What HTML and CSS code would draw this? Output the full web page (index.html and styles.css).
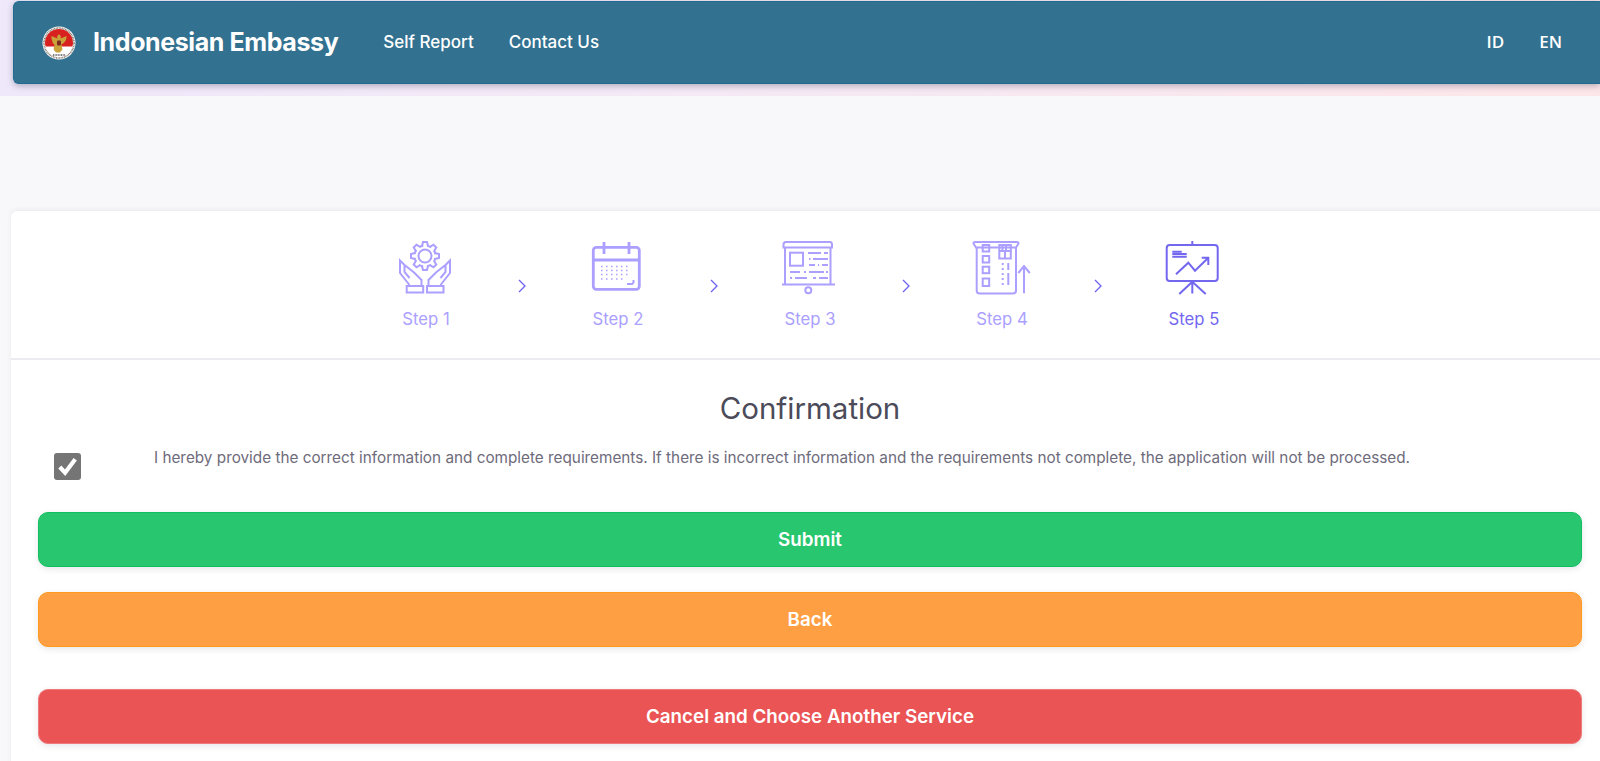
FILE: index.html
```html
<!DOCTYPE html>
<html lang="en">
<head>
<meta charset="utf-8">
<title>Indonesian Embassy</title>
<link rel="stylesheet" href="styles.css">
</head>
<body>
<header class="top-band">
  <nav class="navbar">
    <svg class="logo" viewBox="0 0 34 34" aria-hidden="true">
      <circle cx="17" cy="17" r="16.500" fill="#fff"/>
      <path d="M3 17a14 14 0 0 1 28 0c0 1.500-.3 2.500-.8 3.500H3.800C3.300 19.500 3 18.500 3 17z" fill="#d8201f"/>
      <circle cx="17" cy="17" r="15" fill="none" stroke="#5a4a3a" stroke-width="1.600" stroke-dasharray="1 .7" stroke-opacity=".75" pathLength="100"/>
      <path d="M17 8l2 2.500-.5 2 2.500-1 3.500-1.500c.3 3-1 6-3.500 7.500l-1.500 1 1 5-2.500 3h-4l-2.500-3 1-5-1.500-1C10.500 16 9.200 13 9.500 10l3.500 1.500 2.500 1-.5-2z" fill="#c9a23a"/>
      <rect x="15" y="14.500" width="4" height="5" rx="1" fill="#7a2a20"/>
      <path d="M11 29h12" stroke="#555" stroke-width="1.500" stroke-dasharray="1 .6"/>
    </svg>
    <a class="brand" href="#">Indonesian Embassy</a>
    <ul class="nav-links">
      <li><a href="#">Self Report</a></li>
      <li><a href="#">Contact Us</a></li>
    </ul>
    <ul class="lang-links">
      <li><a href="#">ID</a></li>
      <li><a href="#">EN</a></li>
    </ul>
  </nav>
</header>

<main class="card">
  <section class="stepper">
    <div class="step">
      <svg class="step-icon" viewBox="0 0 60 60" aria-hidden="true">
        <g transform="translate(29 18)">
          <g class="tooth-fill">
            <path d="M-3-10-2-14H2L3-10"/>
            <path d="M-3-10-2-14H2L3-10" transform="rotate(45)"/>
            <path d="M-3-10-2-14H2L3-10" transform="rotate(90)"/>
            <path d="M-3-10-2-14H2L3-10" transform="rotate(135)"/>
            <path d="M-3-10-2-14H2L3-10" transform="rotate(180)"/>
            <path d="M-3-10-2-14H2L3-10" transform="rotate(225)"/>
            <path d="M-3-10-2-14H2L3-10" transform="rotate(270)"/>
            <path d="M-3-10-2-14H2L3-10" transform="rotate(315)"/>
          </g>
          <circle r="10.500" stroke-dasharray="4.200 4.050" stroke-dashoffset="-1.900"/>
          <circle r="6.500"/>
        </g>
        <path d="M13.500 47 4 35V22.500l4.500 4.500v7l5 6M8.500 27l9 7 8 8v5"/>
        <path d="M44.500 47 54 35V22.500L49.500 27v7l-5 6M49.500 27l-9 7-8 8v5"/>
        <rect x="10.700" y="48" width="16.500" height="6.500"/>
        <rect x="31" y="48" width="16.500" height="6.500"/>
      </svg>
      <span class="step-label">Step 1</span>
    </div>
    <svg class="chevron" viewBox="0 0 8 14" aria-hidden="true"><path d="M1 1l6 6-6 6"/></svg>
    <div class="step">
      <svg class="step-icon" viewBox="0 0 60 60" aria-hidden="true">
        <rect class="thick" x="5.300" y="9.300" width="46" height="42" rx="3"/>
        <path class="thick" d="M5.300 22h46M16 4v12M41 4v12"/>
        <path class="dots" d="M13 28.500h30M13 32.500h30M13 36.500h30M13 41h24"/>
        <path d="M39 46h5l1.500-1.500V42"/>
      </svg>
      <span class="step-label">Step 2</span>
    </div>
    <svg class="chevron" viewBox="0 0 8 14" aria-hidden="true"><path d="M1 1l6 6-6 6"/></svg>
    <div class="step">
      <svg class="step-icon" viewBox="0 0 60 60" aria-hidden="true">
        <path d="M3.500 9.500V6.500C3.500 5 4.500 4 6 4h44c1 0 2 1 2 2.500v3zM5 9.500v37M50.500 9.500v37M2 46.500h53"/>
        <circle cx="28.300" cy="52.300" r="3"/>
        <rect x="10" y="14.700" width="13" height="13"/>
        <path d="M28 15h13M44 15h4M29 21h1.500M33 21h15M29 27h6M38 27h1M42 27h6M10 34h10M24 34h2M29 34h15M46 34h2M10 40h2M15 40h12M33 40h3M39 40h9"/>
      </svg>
      <span class="step-label">Step 3</span>
    </div>
    <svg class="chevron" viewBox="0 0 8 14" aria-hidden="true"><path d="M1 1l6 6-6 6"/></svg>
    <div class="step">
      <svg class="step-icon" viewBox="0 0 60 60" aria-hidden="true">
        <path d="M1.500 5.500c0-1 .7-1.500 1.500-1.500h42c1 0 1.500.5 1.500 1.500L44 9.500H4z"/>
        <path d="M4.700 9.500V52.500c0 1.500 1 3 3 3H41c2 0 3-1.500 3-3V9.500"/>
        <rect x="10.700" y="7" width="6.500" height="6.500"/>
        <rect x="10.700" y="18" width="6.500" height="6.500"/>
        <rect x="10.700" y="28.700" width="6.500" height="6.500"/>
        <rect x="10.700" y="40.500" width="6.500" height="7.500"/>
        <rect x="27.300" y="7" width="11.500" height="13.500"/>
        <path d="M27.300 13h11.500M33 13v7.500M30.500 8v4M34 8v4"/>
        <path class="dash" d="M30.700 25v22"/>
        <path d="M36.300 25v7M36.300 35v12"/>
        <path d="M52 55.300V28M46.300 35l5.700-7 5.800 7"/>
      </svg>
      <span class="step-label">Step 4</span>
    </div>
    <svg class="chevron" viewBox="0 0 8 14" aria-hidden="true"><path d="M1 1l6 6-6 6"/></svg>
    <div class="step step-active">
      <svg class="step-icon" viewBox="0 0 60 60" aria-hidden="true">
        <rect x="2.700" y="7" width="51" height="36" rx="3"/>
        <path d="M28.300 3v4M28.300 43.500V55.500M28.300 43.700 15.300 56M28.300 43.700 41.700 56"/>
        <path d="M8.300 13.700h9.400M8.300 16h14.400M8.300 18.700h14.400"/>
        <path d="M12 36.300l12.300-11.600 6.700 8 13.300-13M37.700 19.700h6.600V27"/>
      </svg>
      <span class="step-label">Step 5</span>
    </div>
  </section>

  <section class="confirm">
    <h1 class="confirm-title">Confirmation</h1>
    <div class="agree-row">
      <span class="checkbox">
        <svg viewBox="0 0 28 28" aria-hidden="true"><path d="M6 14.500l5.500 6L22 6.500"/></svg>
      </span>
      <p class="agree-text">I hereby provide the correct information and complete requirements. If there is incorrect information and the requirements not complete, the application will not be processed.</p>
    </div>
    <div class="actions">
      <button class="btn btn-green" type="button">Submit</button>
      <button class="btn btn-orange" type="button">Back</button>
      <button class="btn btn-red btn-cancel" type="button">Cancel and Choose Another Service</button>
    </div>
  </section>
</main>
</body>
</html>
```

FILE: styles.css
```css
* { box-sizing: border-box; }

html, body {
  margin: 0;
  height: 761px;
  overflow: hidden;
}

body {
  background: #f8f8fa;
  font-family: Inter, "Liberation Sans", sans-serif;
  color: #4c4a5a;
}

a { color: inherit; text-decoration: none; }
ul { list-style: none; margin: 0; padding: 0; }

.top-band {
  height: 96px;
  padding: 1px 0 0 13px;
  background: linear-gradient(90deg, #efe8fa 0%, #f5e9f4 50%, #fde6e8 100%);
}

.navbar {
  display: flex;
  align-items: center;
  height: 83px;
  padding: 0 38px 0 28px;
  background: #327190;
  border: 1px solid #1f6c90;
  border-right: 0;
  border-radius: 6px 0 0 6px;
  box-shadow: 0 2px 6px rgba(60, 60, 90, .35);
  color: #fff;
}

.logo {
  width: 34px;
  height: 34px;
  flex: none;
}

.brand {
  margin-left: 17px;
  padding-bottom: 2px;
  font-size: 25px;
  font-weight: 700;
  letter-spacing: -.4px;
}

.nav-links {
  display: flex;
  gap: 35px;
  margin-left: 45px;
  padding-bottom: 2px;
  font-size: 17px;
  font-weight: 500;
}

.lang-links {
  display: flex;
  gap: 35px;
  margin-left: auto;
  padding-bottom: 2px;
  font-size: 17px;
  font-weight: 600;
  font-family: "Open Sans", sans-serif;
}

.card {
  width: 1598px;
  min-height: 560px;
  margin: 115px 0 0 11px;
  background: #fff;
  border-radius: 6px 0 0 0;
  box-shadow: 0 -1px 4px rgba(60, 60, 90, .08);
}

.stepper {
  display: flex;
  justify-content: center;
  align-items: center;
  height: 149px;
  padding-top: 3px;
  border-bottom: 2px solid #ececf0;
}

.step {
  display: flex;
  flex-direction: column;
  align-items: center;
  width: 96px;
  height: 96px;
  color: #ab9fff;
}

.step-active { color: #7367f0; }

.step-icon {
  display: block;
  width: 60px;
  height: 60px;
  fill: none;
  stroke: currentColor;
  stroke-width: 2;
}

.thick { stroke-width: 2.800; }

.tooth-fill path { fill: #fff; }

.dots {
  stroke-width: 1.500;
  stroke-dasharray: 1.500 3.500;
}

.dash { stroke-dasharray: 2 3; }

.step-label {
  margin-top: 11px;
  font-size: 16.700px;
  line-height: 20px;
}

.chevron {
  width: 96px;
  height: 14px;
  fill: none;
  stroke: #6a62f0;
  stroke-width: 1.300;
}

.confirm {
  padding: 28px 27px 0;
}

.confirm-title {
  margin: 0;
  text-align: center;
  font-size: 29.500px;
  line-height: 40px;
  font-weight: 400;
  color: #4b4b5a;
}

.agree-row {
  display: flex;
  align-items: flex-start;
  margin-top: 16px;
}

.checkbox {
  display: block;
  flex: none;
  width: 27px;
  height: 27px;
  margin: 9px 0 0 16px;
  background: #757575;
  border-radius: 3px;
}

.checkbox svg {
  display: block;
  fill: none;
  stroke: #fff;
  stroke-width: 4.300;
}

.agree-text {
  margin: 2px 0 0 73px;
  font-size: 15.300px;
  line-height: 24px;
  color: #6e6b7b;
}

.actions {
  display: flex;
  flex-direction: column;
  gap: 25px;
  margin-top: 32px;
}

.btn {
  display: block;
  width: 100%;
  height: 55px;
  padding: 0;
  border: 1px solid;
  border-radius: 10px;
  font-family: inherit;
  font-size: 18.800px;
  font-weight: 600;
  color: #fff;
  box-shadow: 0 2px 6px rgba(60, 60, 90, .12);
}

.btn-green { background: #28c76f; border-color: #10c060; }
.btn-orange { background: #ff9f43; border-color: #ff9a1f; }
.btn-red { background: #ea5455; border-color: #ee7a7c; }

.btn-cancel { margin-top: 17px; }
```
